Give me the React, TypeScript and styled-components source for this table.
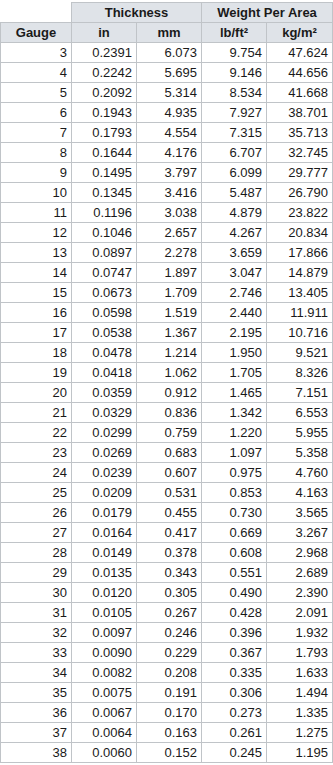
import React from 'react'
import styled, { createGlobalStyle } from 'styled-components'

const GlobalStyle = createGlobalStyle`
  body {
    margin: 0;
    padding-top: 2px;
    background: #ffffff;
    font-family: "Liberation Sans", Arial, sans-serif;
  }
`

const Table = styled.table`
  border-collapse: collapse;
  width: 333px;
  table-layout: fixed;
  font-size: 13px;
  color: #1a1a1a;
`

const HeadCell = styled.th<{ $blank?: boolean }>`
  height: 19px;
  padding: 0;
  font-weight: bold;
  text-align: center;
  background: ${({ $blank }) => ($blank ? 'transparent' : '#dfe3e8')};
  border: ${({ $blank }) => ($blank ? 'none' : '1px solid #c0c4c8')};
`

const Cell = styled.td`
  height: 19px;
  padding: 0 4px 0 0;
  text-align: right;
  border: 1px solid #c0c4c8;
  white-space: nowrap;
`

type Row = [number, string, string, string, string]

const rows: Row[] = [
  [3, '0.2391', '6.073', '9.754', '47.624'],
  [4, '0.2242', '5.695', '9.146', '44.656'],
  [5, '0.2092', '5.314', '8.534', '41.668'],
  [6, '0.1943', '4.935', '7.927', '38.701'],
  [7, '0.1793', '4.554', '7.315', '35.713'],
  [8, '0.1644', '4.176', '6.707', '32.745'],
  [9, '0.1495', '3.797', '6.099', '29.777'],
  [10, '0.1345', '3.416', '5.487', '26.790'],
  [11, '0.1196', '3.038', '4.879', '23.822'],
  [12, '0.1046', '2.657', '4.267', '20.834'],
  [13, '0.0897', '2.278', '3.659', '17.866'],
  [14, '0.0747', '1.897', '3.047', '14.879'],
  [15, '0.0673', '1.709', '2.746', '13.405'],
  [16, '0.0598', '1.519', '2.440', '11.911'],
  [17, '0.0538', '1.367', '2.195', '10.716'],
  [18, '0.0478', '1.214', '1.950', '9.521'],
  [19, '0.0418', '1.062', '1.705', '8.326'],
  [20, '0.0359', '0.912', '1.465', '7.151'],
  [21, '0.0329', '0.836', '1.342', '6.553'],
  [22, '0.0299', '0.759', '1.220', '5.955'],
  [23, '0.0269', '0.683', '1.097', '5.358'],
  [24, '0.0239', '0.607', '0.975', '4.760'],
  [25, '0.0209', '0.531', '0.853', '4.163'],
  [26, '0.0179', '0.455', '0.730', '3.565'],
  [27, '0.0164', '0.417', '0.669', '3.267'],
  [28, '0.0149', '0.378', '0.608', '2.968'],
  [29, '0.0135', '0.343', '0.551', '2.689'],
  [30, '0.0120', '0.305', '0.490', '2.390'],
  [31, '0.0105', '0.267', '0.428', '2.091'],
  [32, '0.0097', '0.246', '0.396', '1.932'],
  [33, '0.0090', '0.229', '0.367', '1.793'],
  [34, '0.0082', '0.208', '0.335', '1.633'],
  [35, '0.0075', '0.191', '0.306', '1.494'],
  [36, '0.0067', '0.170', '0.273', '1.335'],
  [37, '0.0064', '0.163', '0.261', '1.275'],
  [38, '0.0060', '0.152', '0.245', '1.195'],
]

export default function App() {
  return (
    <>
      <GlobalStyle />
      <Table>
        <colgroup>
          <col style={{ width: 71 }} />
          <col style={{ width: 65 }} />
          <col style={{ width: 65 }} />
          <col style={{ width: 65 }} />
          <col style={{ width: 66 }} />
        </colgroup>
        <thead>
          <tr>
            <HeadCell $blank />
            <HeadCell colSpan={2}>Thickness</HeadCell>
            <HeadCell colSpan={2}>Weight Per Area</HeadCell>
          </tr>
          <tr>
            <HeadCell>Gauge</HeadCell>
            <HeadCell>in</HeadCell>
            <HeadCell>mm</HeadCell>
            <HeadCell>lb/ft²</HeadCell>
            <HeadCell>kg/m²</HeadCell>
          </tr>
        </thead>
        <tbody>
          {rows.map((r) => (
            <tr key={r[0]}>
              {r.map((v, i) => (
                <Cell key={i}>{v}</Cell>
              ))}
            </tr>
          ))}
        </tbody>
      </Table>
    </>
  )
}
